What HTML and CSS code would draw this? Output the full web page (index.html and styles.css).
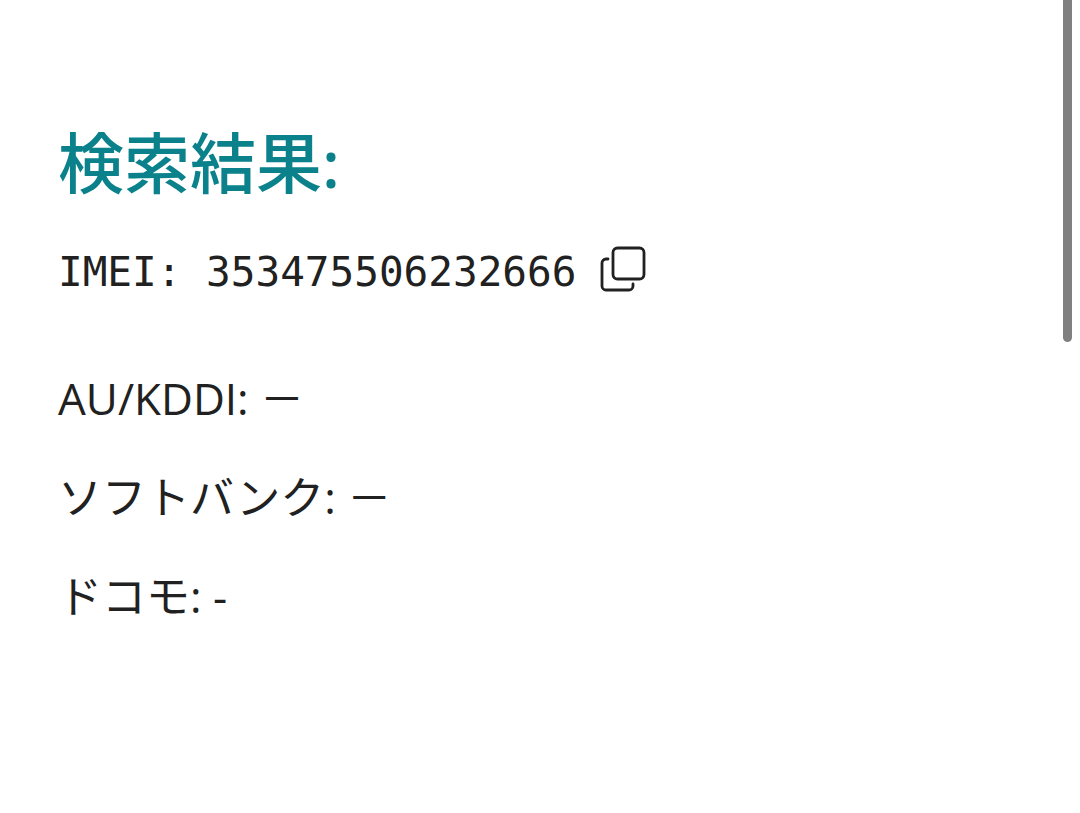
FILE: index.html
```html
<!DOCTYPE html>
<html lang="ja">
<head>
  <meta charset="UTF-8" />
  <meta name="viewport" content="width=device-width, initial-scale=1.0"/>
  <title>検索結果</title>
  <link rel="stylesheet" href="styles.css">
</head>
<body>
<main class="result">
  <h1 class="title">検索結果:</h1>
  <div class="imei">
    <span class="number">IMEI: 353475506232666</span>
    <button class="copy" type="button" aria-label="コピー">
      <svg viewBox="0 0 46 46" width="46" height="46" fill="none" stroke="#212121" stroke-width="2.8" stroke-linecap="round">
        <rect x="13" y="2" width="31" height="31" rx="4.5"/>
        <path d="M8 13H6a4 4 0 0 0-4 4v23a4 4 0 0 0 4 4h23a4 4 0 0 0 4-4v-2"/>
      </svg>
    </button>
  </div>
  <p class="carrier">AU/KDDI: －</p>
  <p class="carrier">ソフトバンク: －</p>
  <p class="carrier">ドコモ: -</p>
</main>
<div class="scrollbar"></div>
</body>
</html>
```

FILE: styles.css
```css
body {
  margin: 0;
  background: #fff;
  color: #212121;
  font-family: "Open Sans", "Noto Sans CJK JP", sans-serif;
}
.result {
  padding: 112px 58px 0;
}
.title {
  margin: 0;
  color: #0b828b;
  font-family: "Noto Sans", "Noto Sans CJK JP", sans-serif;
  font-size: 66px;
  font-weight: 500;
  line-height: 100px;
}
.imei {
  display: flex;
  align-items: center;
  gap: 24px;
  height: 64px;
  margin: 25px 0 65px;
}
.number {
  padding-top: 5px;
  font-family: "DejaVu Sans Mono", monospace;
  font-size: 41px;
}
.copy {
  display: flex;
  padding: 0;
  border: 0;
  background: none;
}
.carrier {
  margin: 0 0 35px;
  font-size: 44px;
  line-height: 64px;
}
.scrollbar {
  position: absolute;
  top: 0;
  right: 8px;
  width: 9px;
  height: 342px;
  border-radius: 0 0 5px 5px;
  background: #808080;
}
```
